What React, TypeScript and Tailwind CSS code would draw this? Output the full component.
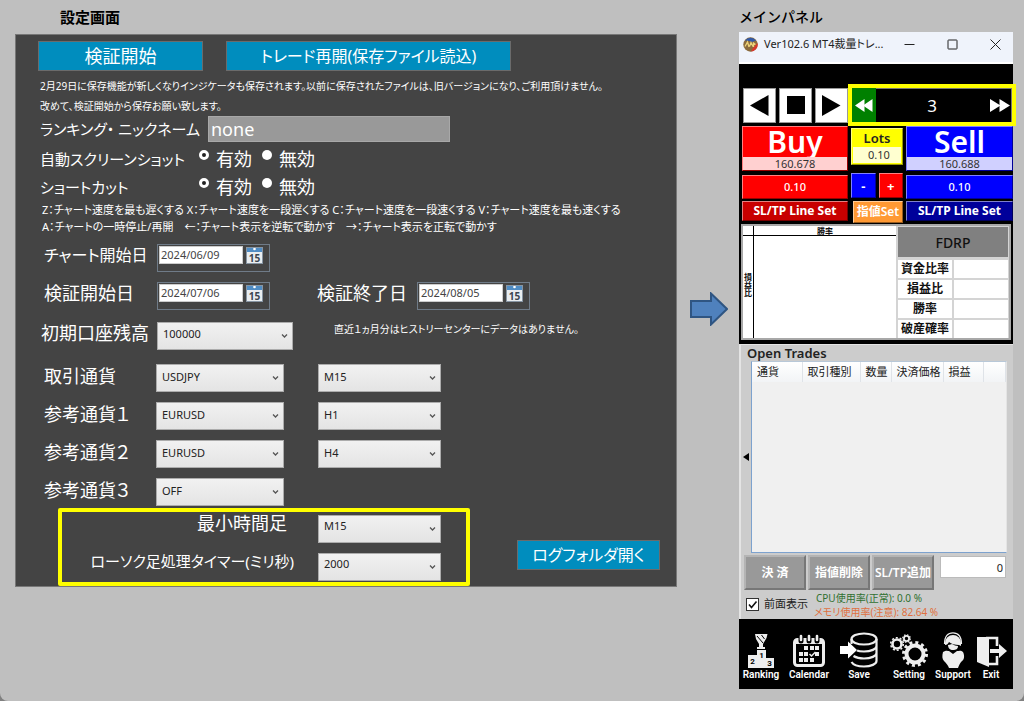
import type { ReactNode } from "react";

const currencies = ["USDJPY", "EURUSD", "OFF"];
const frames = ["M1", "M5", "M15", "H1", "H4"];

const pairRows = [
  { id: "trade", label: "取引通貨", pair: "USDJPY", frame: "M15" },
  { id: "ref1", label: "参考通貨１", pair: "EURUSD", frame: "H1" },
  { id: "ref2", label: "参考通貨２", pair: "EURUSD", frame: "H4" },
  { id: "ref3", label: "参考通貨３", pair: "OFF", frame: "" },
];

const columns = [
  { name: "通貨", width: "w-[50px]" },
  { name: "取引種別", width: "w-[58px]" },
  { name: "数量", width: "w-[31px]" },
  { name: "決済価格", width: "w-[52px]" },
  { name: "損益", width: "w-[40px]" },
  { name: "", width: "" },
];

type SelectProps = {
  id: string;
  value: string;
  options: string[];
  width: string;
  label?: string;
};

function SelectBox({ id, value, options, width, label }: SelectProps) {
  return (
    <div className={`relative h-7 shrink-0 ${width}`}>
      <select
        id={id}
        aria-label={label}
        defaultValue={value}
        className="block h-full w-full appearance-none border border-[#acacac] bg-linear-to-b from-[#f1f1f1] to-[#e4e4e4] pb-1.5 pl-[5px] text-[11px] text-[#222]"
      >
        {options.map((o) => (
          <option key={o}>{o}</option>
        ))}
      </select>
      <svg className="pointer-events-none absolute right-[5px] top-[11px]" width="7" height="6" viewBox="0 0 7 6">
        <path d="M1 1.5 3.5 4 6 1.5" fill="none" stroke="#555" strokeWidth="1.3" />
      </svg>
    </div>
  );
}

function DateBox({ id, value }: { id: string; value: string }) {
  return (
    <div className="flex h-7 w-[113px] shrink-0 items-start border border-[#6f7b88] p-px">
      <input
        id={id}
        defaultValue={value}
        className="h-[18px] w-[84px] border border-[#ccc] bg-white px-px text-[11px] text-[#444]"
      />
      <button aria-label="カレンダー" className="ml-[3px] mt-px">
        <svg width="17" height="17" viewBox="0 0 17 17">
          <rect width="17" height="17" fill="#e9edf0" />
          <rect width="17" height="5" fill="#4f8cc4" />
          <circle cx="8.5" cy="2" r="1.3" fill="#fff" />
          <rect x="0.5" y="0.5" width="16" height="16" fill="none" stroke="#8795a3" />
          <text x="8.5" y="14.5" fontSize="10" fontWeight="700" textAnchor="middle" fill="#3c4650">15</text>
        </svg>
      </button>
    </div>
  );
}

function RadioRow({ title, name, size }: { title: string; name: string; size: string }) {
  return (
    <fieldset className="flex h-7 items-center pl-0.5 text-[18px] leading-7">
      <legend className={`float-left w-[159px] whitespace-nowrap ${size}`}>{title}</legend>
      {["有効", "無効"].map((text, i) => (
        <label key={text} className="mr-[10px] flex items-start gap-[7px]">
          <input
            type="radio"
            name={name}
            defaultChecked={i === 0}
            className="mt-[5px] size-[10px] appearance-none rounded-full bg-white checked:border-[3px] checked:border-white checked:bg-[#222]"
          />
          {text}
        </label>
      ))}
    </fieldset>
  );
}

function BlueButton({ className, children }: { className: string; children: ReactNode }) {
  return (
    <button className={`h-[30px] whitespace-nowrap border border-[#6b6b6b] bg-[#008dbe] leading-7 text-white ${className}`}>
      {children}
    </button>
  );
}

function SettingsPanel() {
  return (
    <div className="flex flex-col border border-[#777] bg-[#444] pl-[22px] pt-[6px] text-white [font-feature-settings:'palt']">
      <div className="flex gap-[23px]">
        <BlueButton className="w-[165px] text-[18px]">検証開始</BlueButton>
        <BlueButton className="w-[285px] text-[16px]">トレード再開(保存ファイル読込)</BlueButton>
      </div>

      <p className="mt-[5px] whitespace-nowrap pl-0.5 text-[10px] leading-5">
        2月29日に保存機能が新しくなりインジケータも保存されます。以前に保存されたファイルは、旧バージョンになり、ご利用頂けません。
        <br />
        改めて、検証開始から保存お願い致します。
      </p>

      <div className="flex h-[26px] items-center pl-0.5">
        <label htmlFor="nickname" className="w-[168px] whitespace-nowrap text-[15px] leading-6">ランキング・ ニックネーム</label>
        <input
          id="nickname"
          defaultValue="none"
          className="h-[26px] w-[242px] border border-[#a8a8a8] bg-[#999] px-0.5 text-[18px] text-white"
        />
      </div>

      <div className="mt-[3px]">
        <RadioRow title="自動スクリーンショット" name="screenshot" size="text-[15px]" />
        <RadioRow title="ショートカット" name="shortcut" size="text-[15px]" />
      </div>

      <p className="whitespace-pre pl-1 text-[11px] leading-[17px]">
        Z：チャート速度を最も遅くする X：チャート速度を一段遅くする C：チャート速度を一段速くする V：チャート速度を最も速くする
        <br />
        A：チャートの一時停止/再開　←：チャート表示を逆転で動かす　→：チャート表示を正転で動かす
      </p>

      {/* Dates */}
      <div className="mt-[9px] flex flex-col gap-[10px] pl-[6px] text-[18px] leading-[22px]">
        <div className="flex">
          <label htmlFor="chart-start" className="w-[113px] whitespace-nowrap text-[16px]">チャート開始日</label>
          <DateBox id="chart-start" value="2024/06/09" />
        </div>
        <div className="flex">
          <label htmlFor="test-start" className="w-[113px]">検証開始日</label>
          <DateBox id="test-start" value="2024/07/06" />
          <label htmlFor="test-end" className="ml-[47px] w-[100px]">検証終了日</label>
          <DateBox id="test-end" value="2024/08/05" />
        </div>
      </div>

      <div className="mt-3 flex pl-[3px] text-[18px] leading-[22px]">
        <label htmlFor="balance" className="w-[116px]">初期口座残高</label>
        <SelectBox id="balance" value="100000" options={["100000", "500000", "1000000"]} width="w-[136px]" />
        <p className="ml-[41px] text-[10px] leading-[14px]">直近１ヵ月分はヒストリーセンターにデータはありません。</p>
      </div>

      {/* Currency pairs */}
      <div className="mt-[14px] flex flex-col gap-[10px] pl-[6px] text-[18px] leading-6">
        {pairRows.map((row) => (
          <div key={row.id} className="flex">
            <label htmlFor={row.id} className="w-[112px]">{row.label}</label>
            <SelectBox id={row.id} value={row.pair} options={currencies} width="w-[128px]" />
            {row.frame && (
              <div className="ml-[34px]">
                <SelectBox id={`${row.id}-frame`} label={`${row.label} 時間足`} value={row.frame} options={frames} width="w-[123px]" />
              </div>
            )}
          </div>
        ))}
      </div>

      <div className="mt-0.5 flex items-center">
        <div className="ml-5 flex w-[412px] flex-col gap-[10px] rounded-xs border-4 border-[#ff0] pb-px pt-[3px] text-[18px] leading-4">
          <div className="flex">
            <label htmlFor="min-frame" className="w-[256px] pr-[31px] text-right">最小時間足</label>
            <SelectBox id="min-frame" value="M15" options={frames} width="w-[123px]" />
          </div>
          <div className="flex">
            <label htmlFor="timer" className="w-[256px] whitespace-nowrap pr-6 text-right text-[15px]">ローソク足処理タイマー(ミリ秒)</label>
            <SelectBox id="timer" value="2000" options={["1000", "2000", "3000"]} width="w-[123px]" />
          </div>
        </div>
        <div className="ml-[47px] mt-4">
          <BlueButton className="w-[143px] text-[16px]">ログフォルダ開く</BlueButton>
        </div>
      </div>
    </div>
  );
}

function TitleBar() {
  return (
    <div className="flex h-8 items-center border-b-2 border-white bg-[#eff3fb] pb-1.5 pl-1 text-[11px] text-[#222]">
      <svg className="shrink-0" width="15" height="15" viewBox="0 0 15 15">
        <circle cx="7.5" cy="7.5" r="7.2" fill="#8a6a3c" />
        <path d="M2 3.5A7 7 0 0 1 13 3.5L9 5 6 4Z" fill="#3159a8" />
        <path d="M14.5 6A7 7 0 0 1 8 14.6L10 11Z" fill="#d8382c" />
        <path d="M2 9.5 4.5 5 6 10M6.5 9.5 8 5.5 10 9.5M10.5 10V6l2 1.5" fill="none" stroke="#ecd27a" strokeWidth="1.3" />
      </svg>
      <span className="ml-[6px] flex-1 whitespace-nowrap [font-feature-settings:'palt']">Ver102.6 MT4裁量トレ...</span>
      <button aria-label="最小化" className="px-4">
        <svg width="11" height="11" viewBox="0 0 11 11"><path d="M0.5 5.5h10" stroke="#222" /></svg>
      </button>
      <button aria-label="最大化" className="px-4">
        <svg width="11" height="11" viewBox="0 0 11 11"><rect x="1" y="1" width="9" height="9" rx="0.5" fill="none" stroke="#222" /></svg>
      </button>
      <button aria-label="閉じる" className="pl-4 pr-3">
        <svg width="11" height="11" viewBox="0 0 11 11"><path d="m0.5 0.5 10 10m0-10-10 10" stroke="#222" /></svg>
      </button>
    </div>
  );
}

function PlaybackBar() {
  return (
    <div className="mr-[-3px] flex items-center">
      <div className="flex flex-1 gap-[3px] pl-1">
        <button aria-label="逆転" className="flex h-[35px] flex-1 items-center justify-center border border-[#999] bg-white">
          <svg width="19" height="21" viewBox="0 0 19 21"><path d="M0 10.5 18.5 0v21Z" /></svg>
        </button>
        <button aria-label="停止" className="flex h-[35px] flex-1 items-center justify-center border border-[#999] bg-white">
          <svg width="18" height="18" viewBox="0 0 18 18"><path d="M0 0h18v18H0Z" /></svg>
        </button>
        <button aria-label="再生" className="flex h-[35px] flex-1 items-center justify-center border border-[#999] bg-white">
          <svg width="19" height="21" viewBox="0 0 19 21"><path d="M18.5 10.5 0 0v21Z" /></svg>
        </button>
      </div>
      <div className="flex h-[42px] w-[168px] items-stretch border-4 border-[#ff0] bg-black text-white">
        <button aria-label="遅くする" className="flex w-6 items-center justify-center bg-[#008000]">
          <svg width="18" height="13" viewBox="0 0 18 13" fill="#fff"><path d="M0 6.5 9.5 0v13Z" /><path d="M8 6.5 17.5 0v13Z" /></svg>
        </button>
        <span className="flex-1 border-t border-[#777] text-center text-[17px] leading-[34px]">3</span>
        <button aria-label="速くする" className="flex w-6 items-center justify-center border-r border-t border-[#777]">
          <svg width="20" height="13" viewBox="0 0 20 13" fill="#fff"><path d="M10.5 6.5 0 0v13Z" /><path d="M20 6.5 9.5 0v13Z" /></svg>
        </button>
      </div>
    </div>
  );
}

function OrderButtons() {
  const bevel = "border border-t-white/50 border-l-white/50 border-b-black/40 border-r-black/40";
  return (
    <div className="grid grid-cols-[106px_1fr_107px] gap-x-[3px] pl-[3px] pr-[2px] text-white">
      <button className={`flex h-[45px] flex-col bg-[#f00] ${bevel}`}>
        <span className="w-full text-[30px] font-semibold leading-[30px]">Buy</span>
        <span className="w-full bg-[#ffd0d0] text-[11px] leading-[13px] text-[#333]">160.678</span>
      </button>
      <label className={`mt-0.5 flex h-[37px] flex-col bg-[#ff0] text-center ${bevel}`}>
        <span className="text-[13px] font-semibold leading-[18px] text-[#222]">Lots</span>
        <input defaultValue="0.10" className="mx-px h-4 w-12 bg-[#ffffd0] pl-1 text-center text-[11px] text-[#333]" />
      </label>
      <button className={`flex h-[45px] flex-col bg-[#00f] ${bevel}`}>
        <span className="w-full text-[30px] font-semibold leading-[30px]">Sell</span>
        <span className="w-full bg-[#d0d0ff] text-[11px] leading-[13px] text-[#333]">160.688</span>
      </button>

      <button className={`mt-1 h-6 bg-[#f00] text-[11px] font-medium ${bevel}`}>0.10</button>
      <div className="mt-0.5 flex gap-[3px] text-[13px] font-bold">
        <button className={`h-[25px] flex-1 bg-[#00f] leading-5 ${bevel}`}>-</button>
        <button className={`h-[25px] flex-1 bg-[#f00] leading-5 ${bevel}`}>+</button>
      </div>
      <button className={`mt-1 h-6 bg-[#00f] text-[11px] font-medium ${bevel}`}>0.10</button>

      <button className={`mt-0.5 h-5 whitespace-nowrap bg-[#c80000] text-[12px] font-bold leading-[18px] ${bevel}`}>SL/TP Line Set</button>
      <button className={`ml-0.5 mt-0.5 h-[22px] whitespace-nowrap bg-[#ff9933] text-[12px] font-semibold leading-5 ${bevel}`}>指値Set</button>
      <button className={`mt-0.5 h-5 whitespace-nowrap bg-[#00009a] text-[12px] font-bold leading-[18px] ${bevel}`}>SL/TP Line Set</button>
    </div>
  );
}

function RatioPanel() {
  return (
    <div className="mx-0.5 mt-px flex h-[116px] border-2 border-[#a8a8a8] bg-[#d4d4d4] text-[#111]">
      {/* Win rate chart */}
      <div className="flex flex-1 flex-col bg-white">
        <div className="flex h-[10px] border-b border-black text-[8px] font-semibold leading-[9px]">
          <span className="w-[11px] border-r border-black" />
          <span className="flex-1 text-center">勝率</span>
        </div>
        <div className="flex flex-1">
          <span className="flex w-[11px] items-center justify-center border-r border-black pb-1 text-[8px] font-semibold leading-[9px] [writing-mode:vertical-rl]">
            損益比
          </span>
        </div>
      </div>
      <div className="flex w-[113px] flex-col pl-0.5 pr-px pt-px">
        <div className="h-[30px] bg-[#808080] text-center text-[14px] font-medium leading-[31px]">FDRP</div>
        <table className="mt-px w-full border-separate border-spacing-y-0.5 text-[12px] font-semibold leading-[18px]">
          <tbody>
            {["資金比率", "損益比", "勝率", "破産確率"].map((name) => (
              <tr key={name}>
                <th className="h-[18px] w-[56px] border-r-2 border-[#d4d4d4] bg-white p-0 font-semibold">{name}</th>
                <td className="bg-white p-0" />
              </tr>
            ))}
          </tbody>
        </table>
      </div>
    </div>
  );
}

function OpenTrades() {
  return (
    <div className="border-l-2 border-t border-[#e4e4e4] bg-[#ccc] text-[#222]">
      <h3 className="pl-[6px] text-[13px] font-semibold leading-4">Open Trades</h3>
      <div className="flex pr-[6px]">
        <button aria-label="折りたたむ" className="flex w-[10px] items-center justify-center">
          <svg width="6" height="8" viewBox="0 0 6 8"><path d="M0 4 6 0v8Z" /></svg>
        </button>
        <div className="h-[192px] flex-1 border border-[#7da2ce] border-r-[#e4e4e4] border-t-[#b8c8d8] bg-[#f0f0f0]">
          <table className="w-full table-fixed bg-linear-to-b from-white to-[#f2f4f6] text-[11px]">
            <thead>
              <tr>
                {columns.map((c) => (
                  <th key={c.name} className={`h-5 whitespace-nowrap border-r border-[#dfe3e8] p-0 pl-[5px] text-left font-normal ${c.width}`}>
                    {c.name}
                  </th>
                ))}
              </tr>
            </thead>
          </table>
        </div>
      </div>

      <div className="mt-0.5 flex pl-[3px] pr-[7px]">
        <div className="flex gap-0.5 text-white">
          {["決 済", "指値削除", "SL/TP追加"].map((name) => (
            <button
              key={name}
              className="h-[35px] w-[62px] whitespace-nowrap border-2 border-[#b4b4b4] border-b-[#777] border-r-[#777] bg-[#999] text-[12px] font-semibold"
            >
              {name}
            </button>
          ))}
        </div>
        <input aria-label="件数" defaultValue="0" className="ml-[6px] mt-px h-[22px] w-0 flex-1 border border-[#bbb] bg-white px-0.5 text-right text-[11px]" />
      </div>

      <div className="flex h-[29px] items-center pl-[5px]">
        <label className="flex items-center gap-[5px] text-[11px]">
          <span className="relative size-[13px]">
            <input type="checkbox" defaultChecked className="peer block size-[13px] appearance-none border border-[#333] bg-white" />
            <svg className="pointer-events-none invisible absolute inset-0 peer-checked:visible" width="13" height="13" viewBox="0 0 13 13">
              <path d="m3 6.5 2.5 3L10.5 3.5" fill="none" stroke="#111" strokeWidth="1.6" />
            </svg>
          </span>
          前面表示
        </label>
        <div className="ml-[6px] whitespace-nowrap text-[10px] leading-[14px] [font-feature-settings:'palt']">
          <p className="pl-0.5 text-[#2f7030]">CPU使用率(正常): 0.0 %</p>
          <p className="text-[#e07040]">メモリ使用率(注意): 82.64 %</p>
        </div>
      </div>
    </div>
  );
}

function RankingIcon() {
  return (
    <svg width="28" height="34" viewBox="0 0 28 34" fill="#eee">
      <path d="M8 0h12.500l-1 4-3.500 6v3h2v2H10v-2h2v-3L9 5Z" />
      <path d="m10 2 6 7M14.500 1l3 4" stroke="#000" strokeWidth="1" />
      <path d="M1 21h9v-5h9v8h8v10H1Z" />
      <g fill="#000" fontSize="8" fontWeight="700" textAnchor="middle">
        <text x="14.500" y="24">1</text>
        <text x="5.500" y="30">2</text>
        <text x="22.500" y="32">3</text>
      </g>
    </svg>
  );
}

function CalendarIcon() {
  return (
    <svg width="32" height="34" viewBox="0 0 32 34">
      <rect x="1.5" y="5.5" width="29" height="26" rx="3" fill="none" stroke="#eee" strokeWidth="3" />
      <path d="M2 5h28v5H2Z" fill="#eee" />
      <path d="M8 1v6M16 1v6M24 1v6" stroke="#000" strokeWidth="5" strokeLinecap="round" />
      <path d="M8 2v4M16 2v4M24 2v4" stroke="#eee" strokeWidth="2.6" strokeLinecap="round" />
      <path fill="#eee" d="M11 12h4v4h-4zM17 12h4v4h-4zM22 12h4v4h-4zM6 18h4v4H6zM11 18h4v4h-4zM22 18h4v4h-4zM6 24h4v4H6zM11 24h4v4h-4zM17 24h4v4h-4z" />
      <path d="m16.5 20 2 2 4-4" fill="none" stroke="#eee" strokeWidth="1.5" />
    </svg>
  );
}

function SaveIcon() {
  return (
    <svg width="38" height="36" viewBox="0 0 38 36">
      <g fill="none" stroke="#eee" strokeWidth="2.2">
        <ellipse cx="24" cy="7" rx="12.5" ry="5.5" />
        <path d="M36.500 7v22c0 3-5.500 5.500-12.500 5.500s-11-2-12.500-4.500M36.500 14c0 3-5.500 5.500-12.500 5.500-3 0-5 0-7-1M36.500 21c0 3-5.500 5.500-12.500 5.500-4 0-8-1-10.500-2.500M11.500 7v5" />
      </g>
      <path d="M0 14h8V9.500l9 8.500-9 8.500V22H0Z" fill="#fff" />
    </svg>
  );
}

function SettingIcon() {
  return (
    <svg width="38" height="34" viewBox="0 0 38 34" fill="none" stroke="#eee">
      <circle cx="25" cy="20" r="8.5" strokeWidth="4" />
      <circle cx="25" cy="20" r="11.5" strokeWidth="3" strokeDasharray="3 3.020" />
      <circle cx="7" cy="10" r="4.5" strokeWidth="2.6" />
      <circle cx="7" cy="10" r="6.3" strokeWidth="1.6" strokeDasharray="2 1.960" />
      <circle cx="16.5" cy="4.5" r="2.6" strokeWidth="1.8" />
      <circle cx="16.5" cy="4.5" r="3.8" strokeWidth="1.2" strokeDasharray="1.500 1.480" />
    </svg>
  );
}

function SupportIcon() {
  return (
    <svg width="24" height="36" viewBox="0 0 24 36" fill="#eee">
      <path d="M4 11a8 8 0 0 1 16 0v3l-2-1c-4 0-8-1-10-3-1 2-2 3-4 3Z" />
      <path d="M7 13c2 0 3-1 4-1 2 1 4 2 6 2 0 3-2 4-5 4s-5-2-5-5Z" />
      <path d="M3.500 12C3.500 4 7 .800 12 .800S20.500 4 20.500 12" fill="none" stroke="#eee" strokeWidth="1.2" />
      <path d="M2 20c3-2 5-1 6-1l4 3 4-3c2 0 4-1 6 1 2 4 1 8-1 9-2 2-3 4-4 7H8c-1-3-3-5-5-7-2-2-2-5-1-9Z" />
    </svg>
  );
}

function ExitIcon() {
  return (
    <svg width="31" height="32" viewBox="0 0 31 32">
      <path d="M1 1h12v30L1 26Z" fill="#eee" />
      <path d="M10 2h11v8M21 20v8h-8" fill="none" stroke="#eee" strokeWidth="2.6" />
      <path d="M14 13h9V8l8 7-8 7v-5h-9Z" fill="#eee" />
    </svg>
  );
}

const menu = [
  { name: "Ranking", icon: <RankingIcon />, width: "w-11" },
  { name: "Calendar", icon: <CalendarIcon />, width: "w-[52px]" },
  { name: "Save", icon: <SaveIcon />, width: "w-12" },
  { name: "Setting", icon: <SettingIcon />, width: "w-[52px]" },
  { name: "Support", icon: <SupportIcon />, width: "w-9" },
  { name: "Exit", icon: <ExitIcon />, width: "w-10" },
];

export default function App() {
  return (
    <div className="min-h-screen bg-[#808080] font-['Noto_Sans','Noto_Sans_CJK_JP',sans-serif]">
      <main className="flex min-h-screen items-start rounded-b-lg bg-[#bfbfbf] pl-[15px] pr-[11px]">
        <section className="min-w-0 flex-1">
          <h2 className="h-[34px] pl-[45px] text-[15px] font-bold leading-[34px] text-black">設定画面</h2>
          <SettingsPanel />
        </section>

        <svg className="ml-[13px] mr-[11px] mt-[292px] shrink-0" width="38" height="34" viewBox="0 0 38 34">
          <path d="M1 9h20V1.500L37 17 21 32.500V25H1Z" fill="#4f81bd" stroke="#2f5582" strokeWidth="2" />
        </svg>

        <section className="w-[274px] shrink-0">
          <h2 className="h-8 text-[14px] font-medium leading-[34px] text-black">メインパネル</h2>
          <TitleBar />
          <div className="bg-black pb-1 pt-5">
            <PlaybackBar />
            <OrderButtons />
            <RatioPanel />
          </div>
          <OpenTrades />
          <nav className="flex h-[70px] items-end bg-black pb-[7px] font-['Roboto',sans-serif] text-[10px] font-semibold leading-[14px] text-white">
            {menu.map((item) => (
              <button key={item.name} className={`flex flex-col items-center ${item.width}`}>
                {item.icon}
                {item.name}
              </button>
            ))}
          </nav>
        </section>
      </main>
    </div>
  );
}
